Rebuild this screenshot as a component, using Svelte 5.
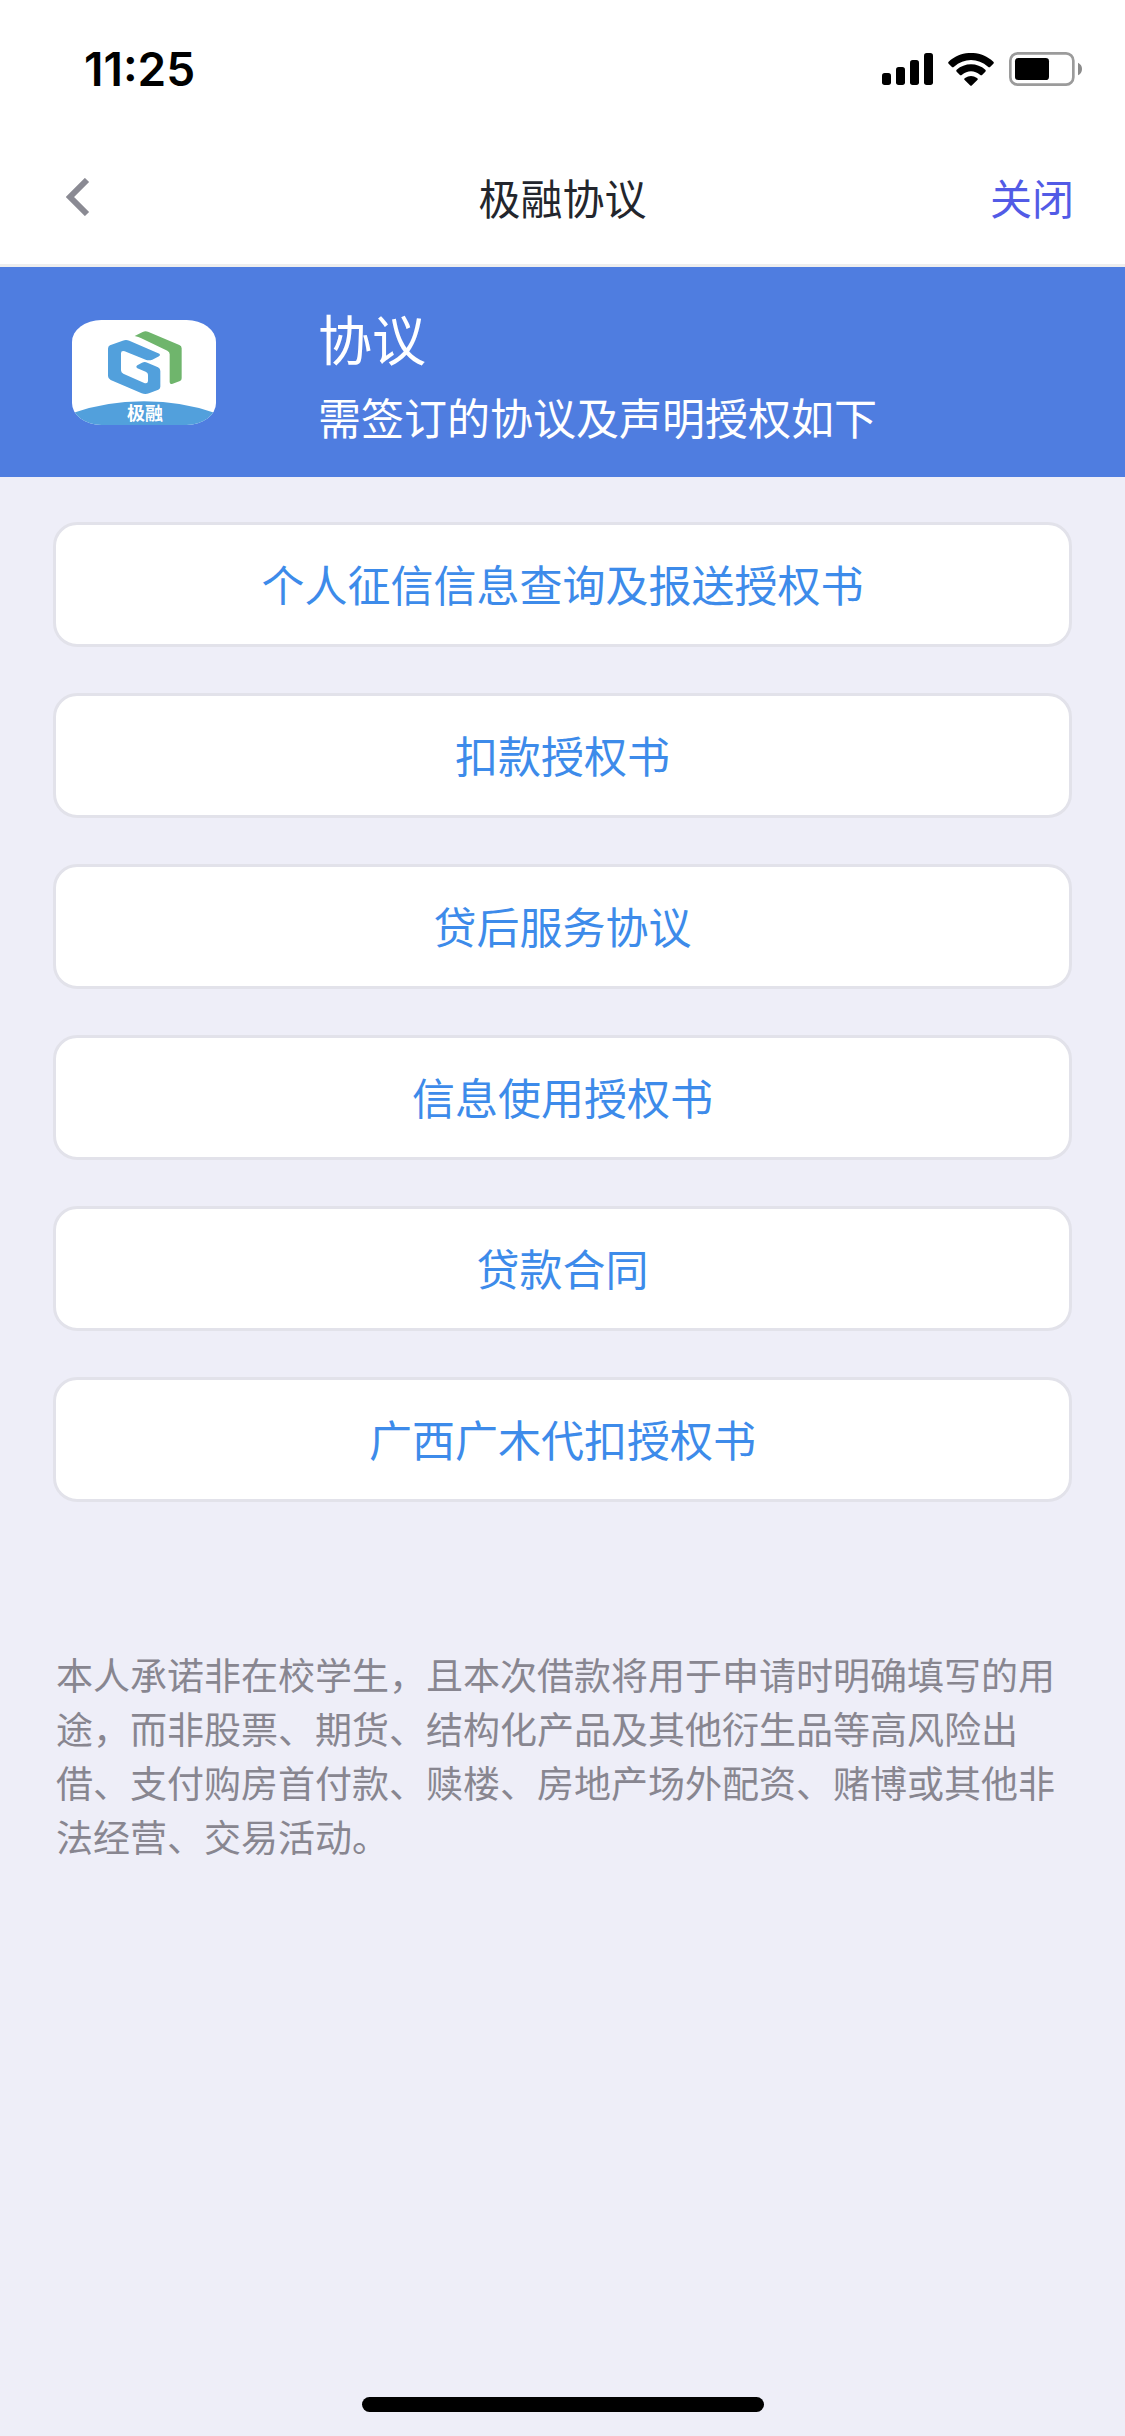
<script lang="ts">
  type Agreement = {
    id: number;
    name: string;
  };

  const agreements: Agreement[] = [
    { id: 1, name: '个人征信信息查询及报送授权书' },
    { id: 2, name: '扣款授权书' },
    { id: 3, name: '贷后服务协议' },
    { id: 4, name: '信息使用授权书' },
    { id: 5, name: '贷款合同' },
    { id: 6, name: '广西广木代扣授权书' },
  ];
</script>

<div class="page">
  <div class="status-bar">
    <span class="time">11:25</span>
    <div class="status-icons">
      <svg width="51" height="32" viewBox="0 0 153 96" aria-hidden="true">
        <rect x="0" y="60" width="27" height="36" rx="8" />
        <rect x="42" y="42" width="27" height="54" rx="8" />
        <rect x="84" y="21" width="27" height="75" rx="8" />
        <rect x="126" y="0" width="27" height="96" rx="8" />
      </svg>
      <svg width="46" height="33" viewBox="0 0 138 99" aria-hidden="true">
        <path d="M2 26C40 -9 98 -9 136 26Q139 29 136 32L127 41Q124 44 120 41C90 14 48 14 18 41Q14 44 11 41L2 32Q-1 29 2 26Z" />
        <path d="M26 50C50 28 88 28 112 50Q115 53 112 56L103 65Q100 68 96 65C80 51 58 51 42 65Q38 68 35 65L26 56Q23 53 26 50Z" />
        <path d="M51 75Q69 63 87 75Q91 78 88 81L72 97Q69 100 66 97L50 81Q47 78 51 75Z" />
      </svg>
      <svg width="73" height="34" viewBox="0 0 219 102" aria-hidden="true">
        <rect x="4" y="4" width="189" height="94" rx="22" fill="none" stroke="#9b9b9b" stroke-width="8" />
        <rect x="18" y="18" width="102" height="66" rx="10" />
        <path d="M207 32Q219 38 219 51Q219 64 207 70Z" fill="#8b8b8b" />
      </svg>
    </div>
  </div>

  <header class="nav-bar">
    <button class="back" type="button" aria-label="返回">
      <svg width="24" height="38" viewBox="0 0 24 38" aria-hidden="true">
        <path d="M21 2L4 19L21 36" fill="none" stroke="#8a8a93" stroke-width="6" />
      </svg>
    </button>
    <h1>极融协议</h1>
    <button class="close" type="button">关闭</button>
  </header>

  <section class="banner">
    <svg class="logo" width="144" height="105" viewBox="0 0 432 315" role="img" aria-label="极融">
      <defs>
        <clipPath id="logo-shape">
          <rect width="432" height="315" rx="88" ry="66" />
        </clipPath>
      </defs>
      <g clip-path="url(#logo-shape)">
        <rect width="432" height="315" fill="#fff" />
        <path d="M0 280Q100 244 216 244Q332 244 432 280V315H0Z" fill="#52a0dc" />
      </g>
      <path d="M188 48L212 36Q220 32 228 35L322 75Q329 78 329 85V175Q329 181 324 183L302 191Q293 194 293 186V103Q293 95 286 92L208 55Q200 51 188 48Z" fill="#6fb56c" />
      <path d="M114 76L152 62Q162 58 172 62L262 101Q267 105 261 109L241 119Q231 123 221 119L158 94Q147 91 147 100V151Q147 158 154 161L215 188Q227 193 228 183V164Q228 158 221 155L196 145Q190 141 196 136L210 128Q218 124 226 128L258 142Q265 146 265 153V200Q265 206 259 209L231 220Q220 224 209 220L116 180Q108 176 108 168V86Q108 79 114 76Z" fill="#52a0dc" />
      <text x="219" y="299" text-anchor="middle">极融</text>
    </svg>
    <div class="banner-text">
      <h2>协议</h2>
      <p>需签订的协议及声明授权如下</p>
    </div>
  </section>

  <main>
    <ul class="agreements">
      {#each agreements as item (item.id)}
        <li><button type="button">{item.name}</button></li>
      {/each}
    </ul>

    <p class="promise">
      本人承诺非在校学生，且本次借款将用于申请时明确填写的用途，而非股票、期货、结构化产品及其他衍生品等高风险出借、支付购房首付款、赎楼、房地产场外配资、赌博或其他非法经营、交易活动。
    </p>
  </main>

  <div class="home-indicator"></div>
</div>

<style>
  :global(body) { margin: 0; background: #eeeef8; }

  .page {
    display: flex;
    flex-direction: column;
    box-sizing: border-box;
    min-height: 100vh;
    padding-bottom: 24px;
    background: #eeeef8;
    font-family: 'Noto Sans CJK SC', sans-serif;
    font-weight: 400;
  }

  h1, h2, p, ul { margin: 0; padding: 0; font-weight: inherit; }
  button { padding: 0; border: 0; background: none; font: inherit; cursor: pointer; }
  svg { display: block; }

  .status-bar {
    display: flex;
    align-items: center;
    justify-content: space-between;
    height: 138px;
    padding: 0 43px 0 84px;
    background: #fff;
  }
  .time { font-family: Inter, sans-serif; font-size: 46px; font-weight: 600; color: #000; }
  .status-icons { display: flex; align-items: center; gap: 15px; }

  .nav-bar {
    display: grid;
    grid-template-columns: 1fr auto 1fr;
    align-items: center;
    height: 118px;
    padding: 0 51px 8px;
    border-bottom: 3px solid #eee;
    background: #fff;
  }
  h1 { font-size: 42px; line-height: 60px; color: #23262d; }
  .back { justify-self: start; padding-left: 15px; }
  .close { justify-self: end; font-size: 42px; line-height: 60px; color: #525be6; }

  .banner {
    display: flex;
    align-items: center;
    gap: 102px;
    padding: 23px 72px;
    background: #4f7de0;
    color: #fff;
  }
  .logo { flex: none; }
  .logo text { font-size: 54px; font-weight: 700; fill: #fff; }
  .banner-text { padding-top: 8px; }
  .banner-text h2 { font-size: 54px; line-height: 80px; }
  .banner-text p { font-size: 43px; line-height: 76px; }

  main { flex: 1; padding: 45px 53px; }
  .agreements { display: flex; flex-direction: column; gap: 46px; list-style: none; }
  .agreements button {
    display: block;
    width: 100%;
    padding: 26px 0 28px;
    border: 3px solid #e2e2ea;
    border-radius: 24px;
    background: #fff;
    color: #3d8bea;
    font-size: 43px;
    line-height: 65px;
  }
  .promise { margin-top: 145px; padding: 0 3px; font-size: 37px; line-height: 54px; color: #888690; }

  .home-indicator {
    align-self: center;
    width: 402px;
    height: 15px;
    border-radius: 8px;
    background: #000;
  }
</style>
